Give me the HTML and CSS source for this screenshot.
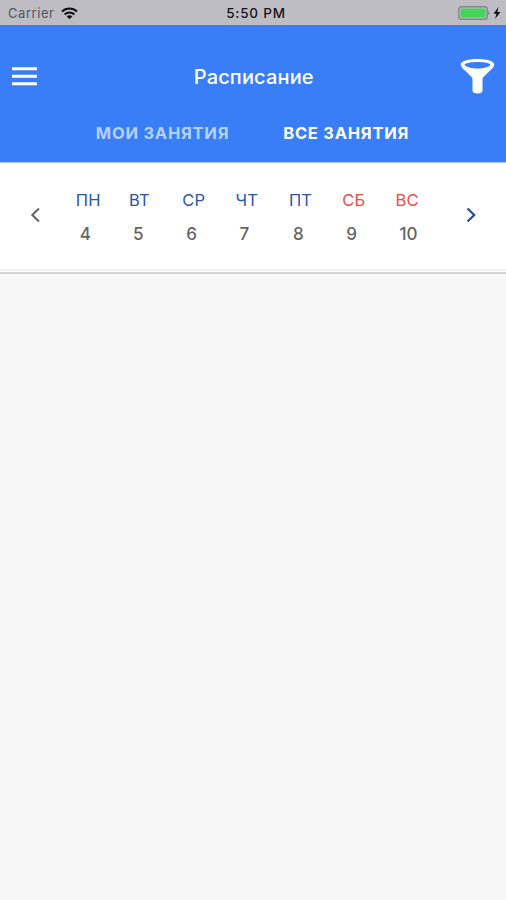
FILE: index.html
```html
<!DOCTYPE html>
<html lang="ru">
<head>
    <meta charset="utf-8">
    <title>Расписание</title>
    <link rel="stylesheet" href="styles.css">
</head>
<body>

<div class="status-bar">
    <div class="carrier">
        <span>Carrier</span>
        <svg class="wifi" width="17" height="13" viewBox="0 0 17 13">
            <path d="M1 4.6C5.2 .6 11.8 .6 16 4.6M3.6 7.4C6.4 4.8 10.6 4.8 13.4 7.4" fill="none" stroke="#111" stroke-width="2"/>
            <path d="M5.6 9.3Q8.5 7.2 11.4 9.3L8.5 12.3Z" fill="#111"/>
        </svg>
    </div>
    <div class="clock">5:50 PM</div>
    <div class="power">
        <svg width="44" height="15" viewBox="0 0 44 15">
            <rect x=".8" y=".8" width="28.4" height="12.4" rx="2.5" fill="none" stroke="#858589" stroke-width="1.4"/>
            <rect x="2.5" y="2.5" width="25" height="9" rx="1" fill="#43d65b"/>
            <path d="M30.2 4.6Q33 7 30.2 9.4Z" fill="#858589"/>
            <path d="M40.5 1L35.5 7.8H38.5L37 13L42.5 6H39.4Z" fill="#111"/>
        </svg>
    </div>
</div>

<header class="header">
    <div class="toolbar">
        <svg class="menu" width="25" height="19" viewBox="0 0 25 19">
            <path d="M0 1.7H25M0 9.3H25M0 16.7H25" stroke="#fff" stroke-width="3"/>
        </svg>
        <h1 class="title">Расписание</h1>
        <svg class="filter" width="36" height="37" viewBox="0 0 36 37">
            <path d="M.7 6.5C.7 3.2 8 1 17.5 1S34.3 3.2 34.3 6.5C34.3 9 31.5 11.2 28.5 14L23.5 19Q22.5 20.2 22.5 22V32.5Q22.5 35.5 17.5 35.5T12.5 32.5V22Q12.5 20.2 11.5 19L6.5 14C3.5 11.2 .7 9 .7 6.5Z" fill="#fff"/>
            <path d="M4.5 6.7C6 4.8 11 4 17.5 4S29 4.8 30.5 6.7C28.5 9.2 23.5 10.5 17.5 10.5S6.5 9.2 4.5 6.7Z" fill="#397ef6"/>
        </svg>
    </div>
    <nav class="tabs">
        <a class="tab">МОИ ЗАНЯТИЯ</a>
        <a class="tab active">ВСЕ ЗАНЯТИЯ</a>
    </nav>
</header>

<section class="week">
    <svg class="arrow prev" width="10" height="16" viewBox="0 0 10 16">
        <path d="M9 1.5L2.3 8L9 14.5" fill="none" stroke="#666" stroke-width="2"/>
    </svg>
    <div class="days">
        <div class="day"><span class="name">ПН</span><span class="date">4</span></div>
        <div class="day"><span class="name">ВТ</span><span class="date">5</span></div>
        <div class="day"><span class="name">СР</span><span class="date">6</span></div>
        <div class="day"><span class="name">ЧТ</span><span class="date">7</span></div>
        <div class="day"><span class="name">ПТ</span><span class="date">8</span></div>
        <div class="day weekend"><span class="name">СБ</span><span class="date">9</span></div>
        <div class="day weekend"><span class="name">ВС</span><span class="date">10</span></div>
    </div>
    <svg class="arrow next" width="10" height="16" viewBox="0 0 10 16">
        <path d="M1.5 1.5L8.2 8L1.5 14.5" fill="none" stroke="#244a9e" stroke-width="2.2"/>
    </svg>
</section>

</body>
</html>
```
FILE: styles.css
```css
* {
    box-sizing: border-box;
}
body {
    margin: 0;
    min-height: 900px;
    background: #f7f7f7;
    font-family: Inter, "Liberation Sans", sans-serif;
}
.status-bar {
    display: grid;
    grid-template-columns: 1fr auto 1fr;
    align-items: center;
    height: 25px;
    padding: 1px 4px 0 8px;
    background: #bebdc3;
    color: #161618;
    font-size: 13px;
}
.carrier {
    display: flex;
    align-items: center;
    gap: 7px;
    color: #55555a;
    letter-spacing: .55px;
}
.clock {
    padding-left: 2px;
    font-size: 13.5px;
    font-weight: 500;
    letter-spacing: .8px;
}
.power {
    display: flex;
    justify-content: flex-end;
}
.header {
    height: 138px;
    background: #397ef6;
    border-bottom: 1px solid #aecbff;
    color: #fff;
}
.toolbar {
    display: grid;
    grid-template-columns: 1fr auto 1fr;
    align-items: center;
    height: 102px;
    padding: 0 10px 0 11.5px;
}
.title {
    margin: 0;
    padding-top: 1px;
    font-size: 20px;
    font-weight: 500;
    letter-spacing: .15px;
}
.filter {
    justify-self: end;
}
.tabs {
    display: flex;
    justify-content: center;
    gap: 54px;
    padding-right: 1px;
    line-height: 12px;
}
.tab {
    color: #b5d2ff;
    font-size: 16.5px;
    font-weight: 650;
    letter-spacing: .75px;
}
.tab.active {
    color: #fff;
}
.week {
    display: flex;
    align-items: center;
    height: 108px;
    padding: 0 30px;
    background: #fff;
    border-bottom: 2px solid #f0f0f0;
    box-shadow: 0 1px 0 #fff, 0 3px 0 #d5d5d5;
}
.arrow {
    margin-bottom: 2px;
}
.days {
    display: grid;
    grid-template-columns: repeat(7, 53.3px);
    margin: 2px 0 0 35.7px;
}
.day {
    display: flex;
    flex-direction: column;
    gap: 14px;
    line-height: 20px;
}
.name {
    color: #2c55a5;
    font-size: 16.5px;
    font-weight: 400;
    letter-spacing: .2px;
}
.weekend .name {
    color: #ef4b43;
}
.date {
    padding-left: 4px;
    color: #646464;
    font-size: 17px;
    font-weight: 500;
}
.next {
    margin-left: auto;
}
```
